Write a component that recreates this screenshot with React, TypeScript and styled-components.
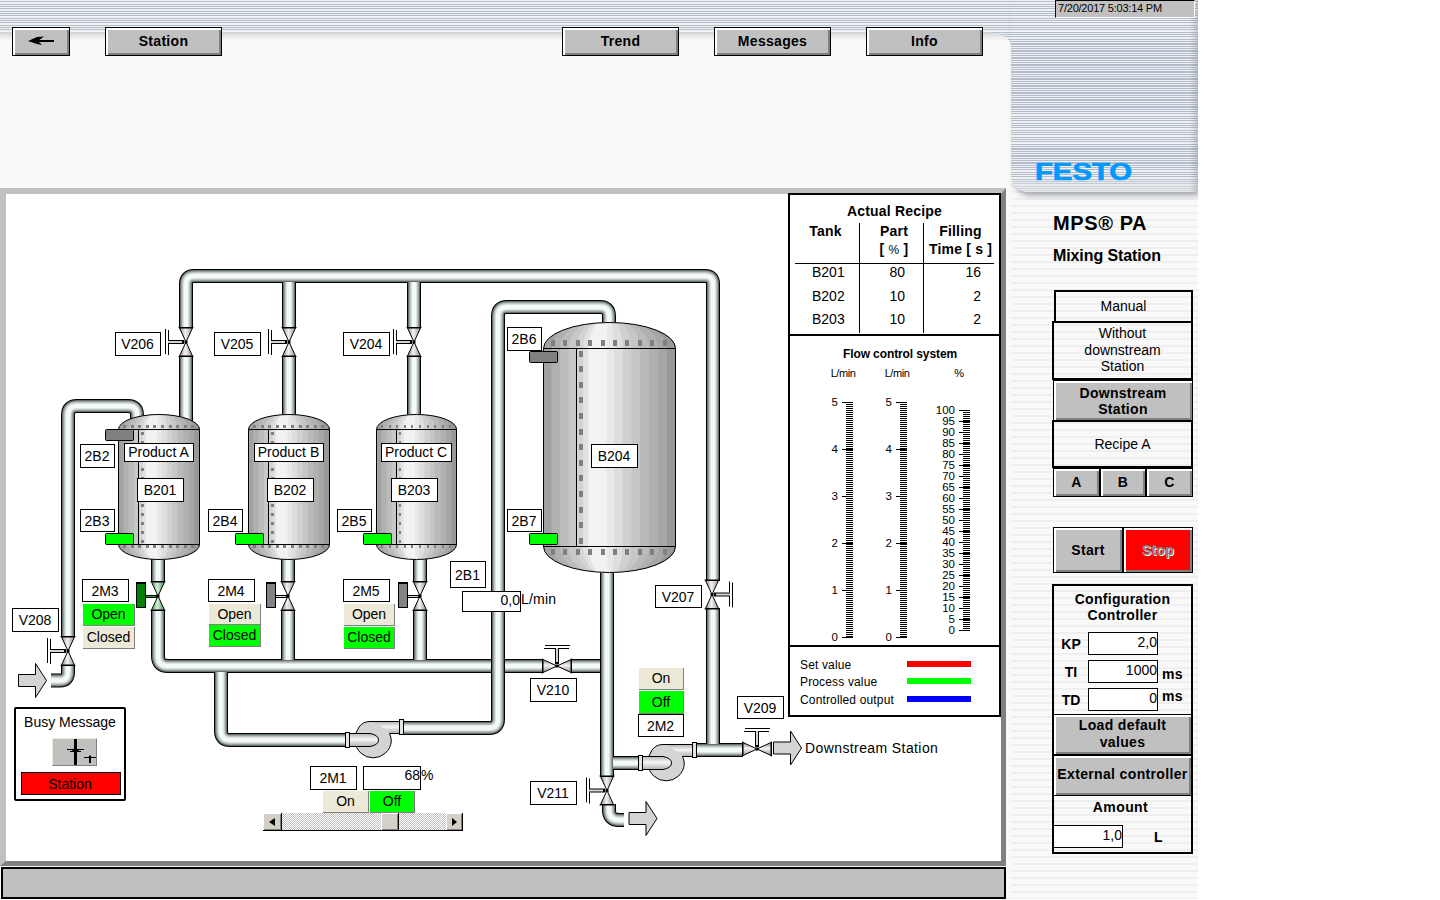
import React from "react";
import styled, { createGlobalStyle } from "styled-components";

const SILVER = "#c0c0c0";
const SHADE = "#808080";
const GREEN = "#00ff00";
const RED = "#ff0000";
const BEIGE = "#ece9d8";

const GlobalStyle = createGlobalStyle`
  body { margin: 0; background: #fff; }
  * { box-sizing: border-box; }
  #root, button, input { font-family: "Liberation Sans", Arial, sans-serif; font-size: 14px; color: #000; }
`;

const headerStripes = `repeating-linear-gradient(180deg,
  #eef1f1 0 1px, #b5bdcc 1px 2px, #eef1f1 2px 4px, #b5bdcc 4px 5px, #eef1f1 5px 6px, #b5bdcc 6px 7px)`;
const denseStripes = `repeating-linear-gradient(180deg, transparent 0 2px, #b5bdcc 2px 3px, transparent 3px 7px)`;

/* ---------- page shell ---------- */

const Page = styled.div`
  display: flex;
  width: 1198px;
  height: 899px;
  overflow: hidden;
  background: ${headerStripes};
`;

const Main = styled.main`
  display: flex;
  flex-direction: column;
  width: 1011px;
  height: 899px;
`;

const TopShade = styled.div`
  flex: none;
  height: 32px;
`;

const Sheet = styled.div`
  display: flex;
  flex-direction: column;
  flex: 1;
  border-top-right-radius: 26px 14px;
  background: linear-gradient(180deg, #cfcfd2 0, #e2e2e2 3px, #f0f0f0 6px, #f9f9f9 9px);
`;

const NavBar = styled.nav`
  display: flex;
  height: 155px;
  margin-top: -5px;
  padding-left: 12px;
  align-items: flex-start;
`;

const Bevel = styled.button<{ $bg?: string }>`
  display: flex;
  align-items: center;
  justify-content: center;
  padding: 0 1px 0 0;
  border: 1px solid #000;
  border-radius: 0;
  background: ${(p) => p.$bg ?? SILVER};
  box-shadow: inset 2px 2px 0 #fff, inset -2px -2px 0 ${SHADE};
  font-weight: bold;
  letter-spacing: 0.3px;
  line-height: 16px;
  text-align: center;
`;

const NavButton = styled(Bevel)<{ $w?: number; $before?: number }>`
  width: ${(p) => p.$w ?? 117}px;
  height: 29px;
  margin-left: ${(p) => p.$before ?? 35}px;
  padding: 0 0 2px;
`;

const Frame = styled.section`
  display: flex;
  justify-content: flex-end;
  align-items: flex-start;
  position: relative;
  width: 1006px;
  height: 678px;
  margin-top: 6px;
  border: solid;
  border-width: 6px 5px 5px 6px;
  border-color: ${SILVER} ${SHADE} ${SHADE} ${SILVER};
  background: #fff;
`;

const MessageBar = styled.footer`
  width: 1005px;
  height: 32px;
  margin: 1px 0 0 1px;
  border: 2px solid #000;
  background: ${SILVER};
`;

/* ---------- free canvas of the process picture ---------- */

const Canvas = styled.div`
  position: absolute;
  left: -6px;
  top: -194px;
  width: 1001px;
  height: 861px;
`;

const Drawing = styled.svg`
  position: absolute;
  left: 0;
  top: 0;
  pointer-events: none;
`;

type Spot = { $x: number; $y: number; $w?: number; $h?: number };

const Placed = styled.div<Spot>`
  position: absolute;
  left: ${(p) => p.$x}px;
  top: ${(p) => p.$y}px;
  width: ${(p) => (p.$w ? `${p.$w}px` : "auto")};
  height: ${(p) => (p.$h ? `${p.$h}px` : "auto")};
  white-space: nowrap;
  line-height: 16px;
`;

const Tag = styled(Placed)`
  display: flex;
  align-items: center;
  justify-content: center;
  padding: 0 1px ${(p) => (p.$h === 19 ? 2 : 0)}px 0;
  border: 1px solid #000;
  background: #fff;
`;

const State = styled(Placed)<{ $on?: boolean }>`
  display: flex;
  align-items: center;
  justify-content: center;
  padding-bottom: 1px;
  border: solid ${SHADE};
  border-width: 0 1px 1px 0;
  background: ${(p) => (p.$on ? GREEN : BEIGE)};
`;

const Value = styled(Placed)`
  border: 1px solid #000;
  background: #fff;
  text-align: right;
`;

const Note = styled(Placed)<{ $sp?: number }>`
  letter-spacing: ${(p) => p.$sp ?? 0}px;
`;

const BusyBox = styled(Placed)`
  display: flex;
  flex-direction: column;
  align-items: center;
  padding-top: 5px;
  border: 2px solid #000;
  border-radius: 2px;
  background: #fff;
`;

const BusyIcon = styled.div`
  width: 45px;
  height: 28px;
  margin: 8px 0 6px 9px;
  border: 1px solid;
  border-color: ${BEIGE} ${SHADE} ${SHADE} ${BEIGE};
  background: ${SILVER};
`;

const BusyAlarm = styled.div`
  width: 100px;
  height: 23px;
  margin-left: 2px;
  border: 1px solid #000;
  background: ${RED};
  text-align: center;
  line-height: 22px;
  padding-right: 2px;
`;

const SliderTrack = styled(Placed)`
  display: flex;
  border-bottom: 1px solid #000;
  background: repeating-conic-gradient(${SILVER} 0 25%, #fff 0 50%) 0 0 / 2px 2px;
`;

const SliderKey = styled.span<{ $gap?: number; $w: number }>`
  display: flex;
  align-items: center;
  justify-content: center;
  width: ${(p) => p.$w}px;
  height: 17px;
  margin-left: ${(p) => p.$gap ?? 0}px;
  border-right: 1px solid #000;
  background: #d4d0c8;
  box-shadow: inset 1px 1px 0 #fff, inset -1px -1px 0 ${SHADE};
`;

/* ---------- recipe / trend panel ---------- */

const Panel = styled.aside`
  position: relative;
  width: 213px;
  height: 524px;
  margin: -1px 0 0;
  border: 2px solid #000;
  background: #fff;
`;

const RecipeSection = styled.div`
  height: 141px;
  padding: 7px 5px 0;
  border-bottom: 2px solid #000;
`;

const PanelTitle = styled.h2<{ $size?: number }>`
  margin: 0;
  padding-left: ${(p) => (p.$size ? 11 : 0)}px;
  font-size: ${(p) => p.$size ?? 14}px;
  line-height: 18px;
  letter-spacing: ${(p) => (p.$size ? -0.1 : 0.2)}px;
  text-align: center;
`;

const RecipeGrid = styled.div`
  display: grid;
  grid-template-columns: 65px 64px 70px;
  grid-template-rows: 41px 24px 23px 22px;
  margin-top: 3px;
`;

const Head = styled.div<{ $shift: number }>`
  margin: -1px -4px 0;
  padding-left: ${(p) => Math.max(p.$shift, 0)}px;
  padding-right: ${(p) => Math.max(-p.$shift, 0)}px;
  font-weight: bold;
  line-height: 18px;
  text-align: center;
  white-space: nowrap;
  letter-spacing: 0.2px;
`;

const Thin = styled.span`
  font-weight: normal;
  font-size: 12px;
`;

const HeadCell = styled.div<{ $line?: boolean }>`
  border-bottom: 1px solid #000;
  border-right: ${(p) => (p.$line ? "1px solid #000" : "0")};
`;

const Cell = styled.div<{ $line?: boolean; $pad: string; $right?: boolean }>`
  border-right: ${(p) => (p.$line ? "1px solid #000" : "0")};
  padding: ${(p) => p.$pad};
  text-align: ${(p) => (p.$right ? "right" : "left")};
  line-height: 16px;
`;

const FlowSection = styled.div`
  height: 311px;
  padding-top: 9px;
  border-bottom: 2px solid #000;
`;

const Legend = styled.div`
  display: flex;
  flex-direction: column;
  padding: 9px 28px 0 10px;
`;

const LegendRow = styled.div<{ $color: string }>`
  display: flex;
  justify-content: space-between;
  align-items: center;
  height: 17.6px;
  font-size: 12px;
  letter-spacing: 0.15px;
  &::after {
    content: "";
    width: 64px;
    height: 6px;
    margin-top: -2px;
    background: ${(p) => p.$color};
  }
`;

/* ---------- sidebar ---------- */

const Sidebar = styled.aside`
  display: flex;
  flex-direction: column;
  width: 187px;
  height: 899px;
  background: repeating-linear-gradient(180deg, #f9f9f9 0 2px, #efefef 2px 4px, #f9f9f9 4px 7px);
`;

const Brand = styled.div`
  display: flex;
  flex-direction: column;
  justify-content: space-between;
  align-items: flex-end;
  flex: none;
  height: 192px;
  border-bottom-left-radius: 18px 16px;
  background:
    linear-gradient(90deg, transparent 179px, rgba(110, 120, 140, 0.3)),
    linear-gradient(180deg, transparent 178px, rgba(225, 227, 232, 0.9)),
    ${denseStripes} 0 42px / 100% 70px no-repeat,
    ${denseStripes} 0 147px / 100% 21px no-repeat,
    ${headerStripes};
  box-shadow: 2px 5px 5px -1px rgba(110, 115, 125, 0.55);
`;

const Clock = styled.div`
  width: 140px;
  height: 18px;
  margin-right: 3px;
  padding-left: 2px;
  border: 1px solid;
  border-color: #000 #fff #fff #000;
  background: ${SILVER};
  font-size: 11px;
  line-height: 14px;
  letter-spacing: -0.22px;
`;

const Logo = styled.svg`
  margin: 0 54px 2px 0;
  overflow: visible;
`;

const SideBody = styled.div`
  display: flex;
  flex-direction: column;
  align-items: flex-start;
  padding: 19px 5px 0 41px;
`;

const Product = styled.h1`
  margin: 0 0 0 1px;
  font-size: 20px;
  line-height: 24px;
  letter-spacing: 0.6px;
`;

const Subtitle = styled.h2`
  margin: 11px 0 0 1px;
  font-size: 16px;
  line-height: 20px;
  letter-spacing: -0.1px;
`;

const StatusBox = styled.div<{ $h: number; $inset?: number; $top?: number }>`
  display: flex;
  align-items: center;
  justify-content: center;
  width: ${(p) => 141 - (p.$inset ?? 0)}px;
  height: ${(p) => p.$h}px;
  margin: ${(p) => p.$top ?? 0}px 0 0 ${(p) => p.$inset ?? 0}px;
  padding-bottom: ${(p) => (p.$h > 50 ? 1 : 0)}px;
  border: 2px solid #000;
  line-height: 16.5px;
  text-align: center;
`;

const KeyRow = styled.div<{ $top?: number }>`
  display: flex;
  margin: ${(p) => p.$top ?? 0}px 0 0 1px;
`;

const Key = styled(Bevel)<{ $w: number; $h: number }>`
  width: ${(p) => p.$w}px;
  height: ${(p) => p.$h}px;
  padding: 0;
  padding-bottom: ${(p) => (p.$h < 40 ? 1 : 0)}px;
`;

const StopText = styled.span`
  color: ${SHADE};
  text-shadow: 1px 1px 0 #fff;
`;

const Config = styled.div`
  display: flex;
  flex-direction: column;
  width: 141px;
  height: 270px;
  margin-top: 11px;
  border: 2px solid #000;
`;

const ConfigTitle = styled.div`
  height: 46px;
  padding-top: 5px;
  font-weight: bold;
  letter-spacing: 0.3px;
  line-height: 16px;
  text-align: center;
`;

const Field = styled.div<{ $last?: boolean }>`
  display: flex;
  align-items: center;
  height: 23px;
  margin-bottom: ${(p) => (p.$last ? 3 : 5)}px;
  font-weight: bold;
`;

const FieldName = styled.span`
  width: 34px;
  text-align: center;
`;

const FieldValue = styled.span`
  width: 70px;
  height: 23px;
  border: 1px solid #000;
  background: #fff;
  font-weight: normal;
  line-height: 18px;
  text-align: right;
`;

const Unit = styled.span<{ $drop: number }>`
  margin: ${(p) => p.$drop}px 0 0 4px;
  letter-spacing: 0.3px;
`;

const WideKey = styled(Bevel)`
  flex: none;
  width: 137px;
  height: 41px;
  padding: 0 0 2px;
  border-width: 1px 0;
  line-height: 17px;
  letter-spacing: 0.35px;
  white-space: pre-line;
`;

const AmountTitle = styled.div`
  height: 29px;
  padding: 3px 4px 0 0;
  font-weight: bold;
  letter-spacing: 0.4px;
  text-align: center;
`;

const AmountRow = styled.div`
  display: flex;
  align-items: center;
  font-weight: bold;
  gap: 31px;
  margin-left: -1px;
`;

/* ---------- drawing parts ---------- */

const pipeLayers: [number, string][] = [
  [14, "#000"],
  [12, "#68706f"],
  [10, "#97a1a0"],
  [8, "#bcc5c4"],
  [6, "#dbe2e1"],
  [4, "#f4fafa"],
];

const Pipe = ({ d }: { d: string }) => (
  <g fill="none">
    {pipeLayers.map(([w, c]) => (
      <path key={w} d={d} stroke={c} strokeWidth={w} />
    ))}
  </g>
);

type Handle = "left" | "right" | "up" | "motor";

const Valve = ({ x, y, handle, open, across }: { x: number; y: number; handle: Handle; open?: boolean; across?: boolean }) => {
  const fill = open ? "url(#valveOpen)" : "url(#valveBody)";
  const turn = handle === "right" ? 180 : handle === "up" ? 90 : 0;
  return (
    <g transform={`translate(${x} ${y})`}>
      <g transform={across ? "rotate(90)" : undefined}>
        <path d="M-6.5-14H6.5L0 0L6.5 14H-6.5L0 0Z" fill={fill} stroke="#000" />
        <path d="M-7.5-14.5H7.5M-7.5 14.5H7.5" stroke="#000" />
      </g>
      {handle === "motor" ? (
        <g>
          <rect x="-21.5" y="-13.5" width="9" height="25" fill={open ? "#008000" : "#848284"} stroke="#000" />
          <path d="M-22-13H-12" stroke="#000" strokeWidth="2" />
          <path d="M-12 .5H-1" stroke="#000" strokeWidth="3" />
          <path d="M-12 .5H-2" stroke={open ? "#2c9c3c" : "#d8d8d8"} />
        </g>
      ) : (
        <g transform={`rotate(${turn})`}>
          <path d="M-18 0H-2" stroke="#000" strokeWidth="4" />
          <path d="M-18 0H-4" stroke="#d4d4d4" strokeWidth="2" />
          <path d="M-20.5-13V12M-17.5-12V-1.5M-17.5 2V13" stroke="#000" />
        </g>
      )}
      <rect x="-1.5" y="-1.5" width="3" height="3" fill="#000" />
    </g>
  );
};

const bands: [number, string][] = [
  [0, "#a2a2a2"],
  [0.06, "#b0b0b0"],
  [0.125, "#bcbcbc"],
  [0.19, "#c8c8c8"],
  [0.25, "#d4d4d4"],
  [0.3, "#e2e2e2"],
  [0.34, "#f2f2f2"],
  [0.48, "#e8e8e8"],
  [0.535, "#dedede"],
  [0.6, "#d0d0d0"],
  [0.665, "#c6c6c6"],
  [0.73, "#bababa"],
  [0.8, "#b0b0b0"],
  [0.87, "#a6a6a6"],
  [0.935, "#989898"],
];

type TankProps = {
  id: string;
  x: number;
  w: number;
  top: number;
  bottom: number;
  dome: number;
  seam: number;
  dot: [number, number];
  step: number;
  ribs: number[];
  ribY: [number, number];
};

const Tank = ({ id, x, w, top, bottom, dome, seam, dot, step, ribs, ribY }: TankProps) => {
  const cx = x + w / 2;
  const right = x + w;
  const shape = `M${x} ${bottom}V${top}A${w / 2} ${dome} 0 0 1 ${right} ${top}V${bottom}A${w / 2} ${dome} 0 0 1 ${x} ${bottom}Z`;
  const rows = Math.floor((bottom - top - 4) / step);
  return (
    <g>
      <clipPath id={id}>
        <path d={shape} />
      </clipPath>
      <g clipPath={`url(#${id})`}>
        {/* every band covers all that lies right of its meridian; the next one is laid over it */}
        {bands.map(([from, color], i) => {
          const a = x + from * w;
          const apex = cx + (a - cx) * 0.3;
          const r = Math.abs(a - apex);
          const s = a < cx ? 1 : 0;
          const edge =
            i === 0
              ? `M${x - 2} ${bottom + dome}V${top - dome - 2}`
              : `M${apex} ${bottom + dome + 1}A${r} ${dome + 1} 0 0 ${s} ${a} ${bottom}V${top}A${r} ${dome + 1} 0 0 ${s} ${apex} ${top - dome - 1}`;
          return <path key={i} fill={color} d={`${edge}H${right + 2}V${bottom + dome + 1}Z`} />;
        })}
      </g>
      <path d={shape} fill="none" stroke="#000" />
      <path d={`M${x} ${top}H${right}M${x} ${bottom}H${right}M${seam} ${top}V${bottom}`} stroke="#000" />
      <g fill="#808080" shapeRendering="crispEdges">
        {ribs.map((r) => (
          <React.Fragment key={r}>
            <rect x={r} y={ribY[0]} width={dot[0]} height={dot[1]} />
            <rect x={r} y={ribY[1]} width={dot[0]} height={dot[1]} />
          </React.Fragment>
        ))}
        {Array.from({ length: rows + 1 }, (_, i) => (
          <rect key={i} x={seam + 2} y={top + 2 + i * step} width={dot[0]} height={dot[1]} />
        ))}
      </g>
    </g>
  );
};

const smallRibs = (x: number) => Array.from({ length: 10 }, (_, i) => Math.round(x + 5 + i * 7.6));

const Sensor = ({ x, y, on }: { x: number; y: number; on?: boolean }) => (
  <rect x={x + 0.5} y={y + 0.5} width="28" height="11" rx="1" fill={on ? GREEN : SHADE} stroke="#000" />
);

const Pump = ({ x, y }: { x: number; y: number }) => (
  <g transform={`translate(${x} ${y})`} stroke="#000">
    <path d="M400 721.5H370Q363 721.5 359 727Q355 732 355 741A18.2 18.2 0 0 0 391.3 741Q391.3 737 389.5 733.5H400Z" fill="#d4d4d4" />
    <path d="M374 722H400V733H389.5L388 731Z" fill="url(#duct)" stroke="none" />
    <path d="M349 733.5H370Q378.5 735 378.5 740Q378.5 745 370 746.5H349Z" fill="url(#duct)" />
    <rect x="345.5" y="732.5" width="4" height="15" fill="#e4e4e4" />
    <rect x="399.5" y="719.5" width="4" height="15" fill="#e4e4e4" />
  </g>
);

const FlowArrow = ({ x, y }: { x: number; y: number }) => (
  <path
    transform={`translate(${x} ${y})`}
    d="M.5-6H17.5V-17L28.5 0L17.5 17V6H.5Z"
    fill="#d4d4d4"
    stroke="#000"
  />
);

const Scale = ({ x, top, gap, labels }: { x: number; top: number; gap: number; labels: string[] }) => (
  <g shapeRendering="crispEdges">
    {Array.from({ length: Math.floor(((labels.length - 1) * gap) / 2) + 1 }, (_, i) => (
      <rect key={i} x={x + 4} y={top + i * 2} width="7" height="1" />
    ))}
    {labels.map((t, i) => (
      <React.Fragment key={t}>
        <rect x={x} y={top + i * gap} width="11" height="1" />
        <text x={x - 4} y={top + i * gap + 4} textAnchor="end" fontSize="11.5">
          {t}
        </text>
      </React.Fragment>
    ))}
  </g>
);

const tags: [string, number, number, number, number][] = [
  ["V206", 115, 332, 46, 24],
  ["V205", 214, 332, 47, 24],
  ["V204", 343, 332, 47, 24],
  ["2B2", 80, 444, 35, 24],
  ["2B3", 80, 509, 35, 23],
  ["2B4", 208, 509, 35, 23],
  ["2B5", 337, 509, 35, 23],
  ["2B6", 507, 327, 35, 24],
  ["2B7", 507, 509, 35, 23],
  ["Product A", 124, 443, 70, 19],
  ["Product B", 254, 443, 70, 19],
  ["Product C", 381, 443, 71, 19],
  ["B201", 137, 478, 47, 24],
  ["B202", 267, 478, 47, 24],
  ["B203", 391, 478, 47, 24],
  ["B204", 591, 444, 47, 24],
  ["2M3", 82, 579, 47, 23],
  ["2M4", 208, 579, 47, 23],
  ["2M5", 343, 579, 47, 23],
  ["V208", 12, 608, 47, 24],
  ["2B1", 450, 561, 36, 27],
  ["V210", 530, 678, 47, 24],
  ["V211", 530, 781, 47, 24],
  ["V207", 655, 585, 47, 23],
  ["V209", 737, 696, 47, 23],
  ["2M2", 638, 714, 46, 23],
  ["2M1", 310, 766, 47, 24],
];

const states: [string, number, number, number, number, boolean][] = [
  ["Open", 83, 604, 52, 22, true],
  ["Closed", 83, 627, 52, 22, false],
  ["Open", 209, 604, 52, 21, false],
  ["Closed", 209, 625, 52, 22, true],
  ["Open", 344, 604, 51, 22, false],
  ["Closed", 344, 627, 51, 22, true],
  ["On", 639, 668, 45, 22, false],
  ["Off", 639, 691, 45, 23, true],
  ["On", 323, 791, 46, 22, false],
  ["Off", 370, 791, 45, 22, true],
];

const recipe = [
  ["B201", "80", "16"],
  ["B202", "10", "2"],
  ["B203", "10", "2"],
];

const ProcessDrawing = () => (
  <Drawing width="1001" height="861">
    <defs>
      <linearGradient id="valveBody">
        <stop offset="0" stopColor="#8c8888" />
        <stop offset=".45" stopColor="#f4f2f2" />
        <stop offset="1" stopColor="#989494" />
      </linearGradient>
      <linearGradient id="valveOpen">
        <stop offset="0" stopColor="#4c9c5c" />
        <stop offset=".45" stopColor="#d8f0dc" />
        <stop offset="1" stopColor="#3c8c4c" />
      </linearGradient>
      <linearGradient id="duct" x2="0" y2="1">
        <stop offset="0" stopColor="#b8b8b8" />
        <stop offset=".45" stopColor="#f6f6f6" />
        <stop offset="1" stopColor="#b4b4b4" />
      </linearGradient>
    </defs>

    <Pipe d="M186 328V284Q186 276 194 276H705Q713 276 713 284V581" />
    <Pipe d="M289 282V328" />
    <Pipe d="M414 282V328" />
    <Pipe d="M186 356V424" />
    <Pipe d="M289 356V418" />
    <Pipe d="M414 356V418" />
    <Pipe d="M68 637V415Q68 406 77 406H128Q137 406 137 415V424" />
    <Pipe d="M68 665V672Q68 680.5 60 680.5H51" />
    <Pipe d="M158 556V582" />
    <Pipe d="M288 556V582" />
    <Pipe d="M420 556V582" />
    <Pipe d="M158 610V656Q158 666 168 666H543" />
    <Pipe d="M571 666H602" />
    <Pipe d="M288 610V660" />
    <Pipe d="M420 610V660" />
    <Pipe d="M221 672V731Q221 740 230 740H346" />
    <Pipe d="M403 728H489Q498 728 498 719V316Q498 307 507 307H600Q609 307 609 316V330" />
    <Pipe d="M607 566V777" />
    <Pipe d="M613 763H639" />
    <Pipe d="M609 804V810Q609 820 619 820H624" />
    <Pipe d="M696 750H743" />
    <Pipe d="M713 608V744" />

    <Tank id="t1" x={118.5} w={81} top={429.5} bottom={544.5} dome={15} seam={138.5} dot={[3, 3]} step={9} ribs={smallRibs(118)} ribY={[425, 545]} />
    <Tank id="t2" x={248.5} w={81} top={429.5} bottom={544.5} dome={15} seam={268.5} dot={[3, 3]} step={9} ribs={smallRibs(248)} ribY={[425, 545]} />
    <Tank id="t3" x={376.5} w={80} top={429.5} bottom={544.5} dome={15} seam={396.5} dot={[2, 3]} step={9} ribs={smallRibs(376)} ribY={[425, 545]} />
    <Tank
      id="t4"
      x={543.5}
      w={132}
      top={348.5}
      bottom={546.5}
      dome={26}
      seam={576.5}
      dot={[4, 6]}
      step={15.6}
      ribs={Array.from({ length: 10 }, (_, i) => Math.round(551 + i * 12.4))}
      ribY={[340, 549]}
    />

    <Sensor x={105} y={429} />
    <Sensor x={105} y={533} on />
    <Sensor x={235} y={533} on />
    <Sensor x={363} y={533} on />
    <Sensor x={529} y={351} />
    <Sensor x={529} y={533} on />

    <Valve x={186} y={342} handle="left" />
    <Valve x={289} y={342} handle="left" />
    <Valve x={414} y={342} handle="left" />
    <Valve x={68} y={651} handle="left" />
    <Valve x={712} y={594.5} handle="right" />
    <Valve x={607} y={790.5} handle="left" />
    <Valve x={557} y={666} handle="up" across />
    <Valve x={757} y={749} handle="up" across />
    <Valve x={158} y={596} handle="motor" open />
    <Valve x={288} y={596} handle="motor" />
    <Valve x={420} y={596} handle="motor" />

    <Pump x={0} y={0} />
    <Pump x={293} y={23} />

    <FlowArrow x={18} y={680.5} />
    <FlowArrow x={628.5} y={818.5} />
    <FlowArrow x={773} y={748} />
  </Drawing>
);

export default function App() {
  return (
    <>
      <GlobalStyle />
      <Page>
        <Main>
          <TopShade />
          <Sheet>
            <NavBar>
              <NavButton $w={58} $before={0} aria-label="Back">
                <svg width="26" height="10" viewBox="0 0 26 10">
                  <path d="M0 5L9 1L16 .5L10 5L14 9L9 8Z" />
                  <path d="M4 5H26" stroke="#000" strokeWidth="2" />
                </svg>
              </NavButton>
              <NavButton>Station</NavButton>
              <NavButton $before={340}>Trend</NavButton>
              <NavButton>Messages</NavButton>
              <NavButton>Info</NavButton>
            </NavBar>
            <Frame>
              <Canvas>
                <ProcessDrawing />
                {tags.map(([t, x, y, w, h]) => (
                  <Tag key={t} $x={x} $y={y} $w={w} $h={h}>{t}</Tag>
                ))}
                {states.map(([t, x, y, w, h, on]) => (
                  <State key={`${x}-${y}`} $x={x} $y={y} $w={w} $h={h} $on={on}>{t}</State>
                ))}
                <Value $x={462} $y={591} $w={59} $h={21}>0,0</Value>
                <Note $x={521} $y={591} $sp={0.2}>L/min</Note>
                <Value $x={363} $y={766} $w={58} $h={24}>68</Value>
                <Note $x={421} $y={767}>%</Note>
                <Note $x={805} $y={740} $sp={0.4}>Downstream Station</Note>
                <BusyBox $x={14} $y={707} $w={112} $h={94}>
                  Busy Message
                  <BusyIcon>
                    <svg width="43" height="26">
                      <path d="M22.5 0V26" stroke="#000" strokeWidth="3" />
                      <path d="M14 10.5H31M17 12.5H28M31 18.5H43" stroke="#000" />
                      <path d="M22.5 8L26 11.5L22.5 14L19 11.5ZM37 16L39 18.5H35Z" />
                      <path d="M37 17V24" stroke="#000" strokeWidth="2" />
                    </svg>
                  </BusyIcon>
                  <BusyAlarm>Station</BusyAlarm>
                </BusyBox>
                <SliderTrack $x={263} $y={813} $w={200} $h={18}>
                  <SliderKey $w={19}>
                    <svg width="6" height="8"><path d="M6 0V8L0 4Z" /></svg>
                  </SliderKey>
                  <SliderKey $w={18} $gap={99} />
                  <SliderKey $w={17} $gap={47}>
                    <svg width="5" height="8"><path d="M0 0V8L5 4Z" /></svg>
                  </SliderKey>
                </SliderTrack>
              </Canvas>

              <Panel>
                <RecipeSection>
                  <PanelTitle>Actual Recipe</PanelTitle>
                  <RecipeGrid>
                    <HeadCell $line><Head $shift={-3}>Tank</Head></HeadCell>
                    <HeadCell $line><Head $shift={5}>Part<br />[ <Thin>%</Thin> ]</Head></HeadCell>
                    <HeadCell><Head $shift={3}>Filling<br />Time [ s ]</Head></HeadCell>
                    {recipe.map(([tank, part, time]) => (
                      <React.Fragment key={tank}>
                        <Cell $line $pad="0 0 0 17px">{tank}</Cell>
                        <Cell $line $pad="0 18px 0 0" $right>{part}</Cell>
                        <Cell $pad="0 13px 0 0" $right>{time}</Cell>
                      </React.Fragment>
                    ))}
                  </RecipeGrid>
                </RecipeSection>
                <FlowSection>
                  <PanelTitle $size={12}>Flow control system</PanelTitle>
                  <svg width="209" height="280" viewBox="790 363 209 280">
                    <g fontSize="11" letterSpacing="-0.45" textAnchor="middle">
                      <text x="843" y="377">L/min</text>
                      <text x="897" y="377">L/min</text>
                      <text x="959" y="377">%</text>
                    </g>
                    <Scale x={842} top={402} gap={47} labels={["5", "4", "3", "2", "1", "0"]} />
                    <Scale x={896} top={402} gap={47} labels={["5", "4", "3", "2", "1", "0"]} />
                    <Scale x={959} top={410} gap={11} labels={Array.from({ length: 21 }, (_, i) => String(100 - i * 5))} />
                  </svg>
                </FlowSection>
                <Legend>
                  <LegendRow $color={RED}>Set value</LegendRow>
                  <LegendRow $color={GREEN}>Process value</LegendRow>
                  <LegendRow $color="#0000ff">Controlled output</LegendRow>
                </Legend>
              </Panel>
            </Frame>
            <MessageBar />
          </Sheet>
        </Main>

        <Sidebar>
          <Brand>
            <Clock>7/20/2017 5:03:14 PM</Clock>
            <Logo width="110" height="36">
              <text x="1" y="26" fontSize="24" fontWeight="bold" fill="#0099ff" stroke="#0099ff" strokeWidth=".7" textLength="97" lengthAdjust="spacingAndGlyphs">
                FESTO
              </text>
            </Logo>
          </Brand>
          <SideBody>
            <Product>MPS® PA</Product>
            <Subtitle>Mixing Station</Subtitle>
            <StatusBox $h={33} $inset={2} $top={24}>Manual</StatusBox>
            <StatusBox $h={59} $top={-2}>Without<br />downstream<br />Station</StatusBox>
            <KeyRow><Key $w={140} $h={41}>Downstream<br />Station</Key></KeyRow>
            <StatusBox $h={48} $top={-1}>Recipe A</StatusBox>
            <KeyRow>
              <Key $w={47} $h={29}>A</Key>
              <Key $w={46} $h={29}>B</Key>
              <Key $w={47} $h={29}>C</Key>
            </KeyRow>
            <KeyRow $top={30}>
              <Key $w={70} $h={46}>Start</Key>
              <Key $w={70} $h={46} $bg={RED}><StopText>Stop</StopText></Key>
            </KeyRow>
            <Config>
              <ConfigTitle>Configuration<br />Controller</ConfigTitle>
              <Field><FieldName>KP</FieldName><FieldValue>2,0</FieldValue></Field>
              <Field><FieldName>TI</FieldName><FieldValue>1000</FieldValue><Unit $drop={4}>ms</Unit></Field>
              <Field $last><FieldName>TD</FieldName><FieldValue>0</FieldValue><Unit $drop={-8}>ms</Unit></Field>
              <WideKey>{"Load default\nvalues"}</WideKey>
              <WideKey>External controller</WideKey>
              <AmountTitle>Amount</AmountTitle>
              <AmountRow><FieldValue>1,0</FieldValue>L</AmountRow>
            </Config>
          </SideBody>
        </Sidebar>
      </Page>
    </>
  );
}
